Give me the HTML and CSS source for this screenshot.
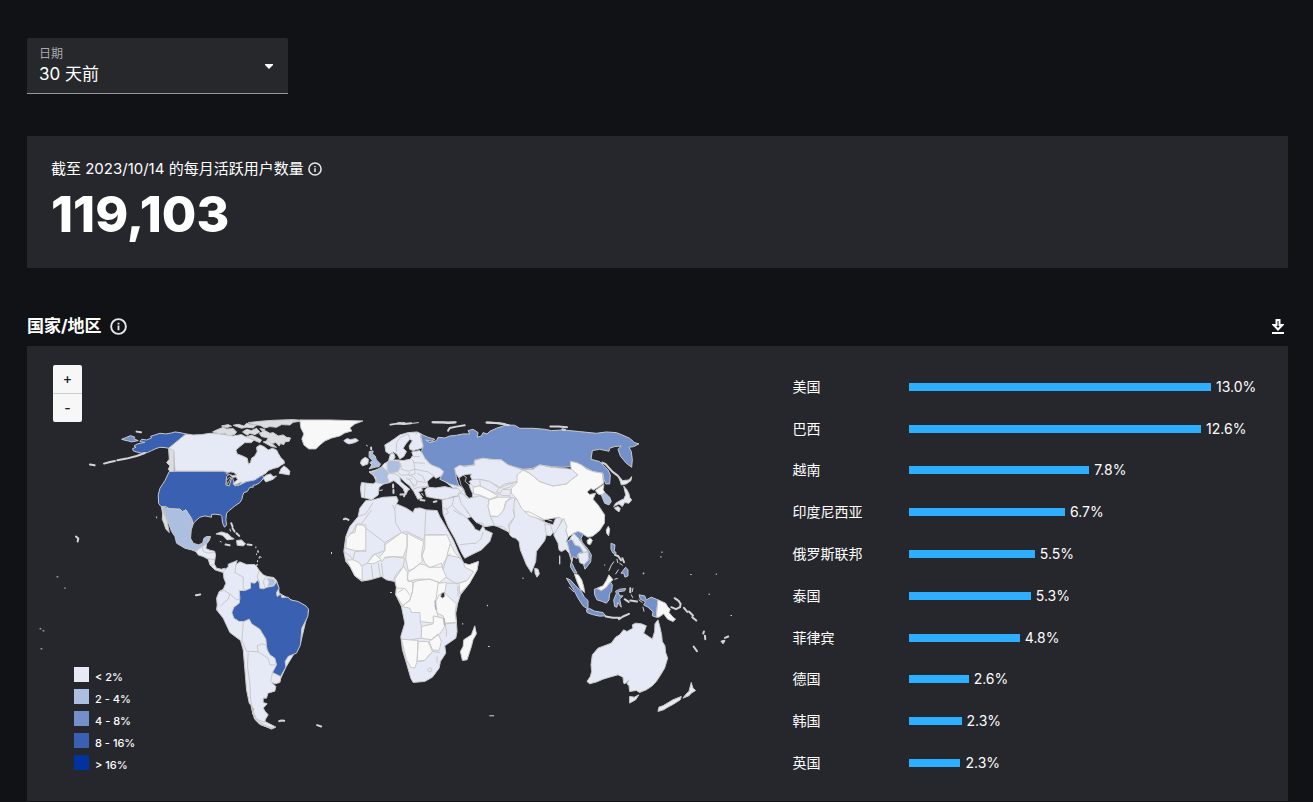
FILE: index.html
```html
<!DOCTYPE html>
<html lang="zh-CN">
<head>
    <meta charset="UTF-8">
    <meta name="viewport" content="width=device-width, initial-scale=1.0">
    <title>每月活跃用户</title>
    <link rel="stylesheet" href="styles.css">
</head>
<body>
    <main class="page">
        <div class="date-field">
            <label for="dateRange">日期</label>
            <select id="dateRange">
                <option>30 天前</option>
            </select>
            <svg class="date-arrow" viewBox="0 0 8 5" aria-hidden="true"><path d="M0 0h8v1L4 5 0 1z"/></svg>
        </div>

        <section class="summary-card">
            <h2 class="summary-label">
                截至 2023/10/14 的每月活跃用户数量
                <svg class="info-icon" viewBox="0 0 18 18" aria-hidden="true"><circle cx="9" cy="9" r="7.8"/><path d="M9 8v5M9 5v1.8"/></svg>
            </h2>
            <p class="summary-value">119,103</p>
        </section>

        <section>
            <header class="section-header">
                <h2>国家/地区</h2>
                <svg class="info-icon large" viewBox="0 0 18 18" aria-hidden="true"><circle cx="9" cy="9" r="7.8"/><path d="M9 8v5M9 5v1.8"/></svg>
                <button class="download-button" aria-label="下载">
                    <svg viewBox="0 0 12 15" aria-hidden="true"><path d="M4.500 1h3v5h2.800L6 10.500 1.700 6h2.800z"/><path d="M0 14h12"/></svg>
                </button>
            </header>

            <div class="region-panel">
                <div class="map-wrap">
                    <svg class="world-map" viewBox="27 346 736 455" role="img" aria-label="国家/地区">
                        <!-- North America -->
                        <g transform="translate(60 410) scale(.33333)">
                            <path class="c1" d="M378 72L400 75 425 74 450 70 480 72 500 75 520 78 545 74 560 82 575 78 582 90 575 98 555 98 540 110 528 120 532 132 548 138 562 145 566 163 572 158 575 145 585 138 592 125 590 112 600 105 612 110 625 120 638 115 650 120 655 130 662 142 672 152 674 160 665 165 655 172 640 176 625 182 618 190 608 196 603 198 585 210 572 215 555 216 540 225 525 228 520 218 528 208 515 200 505 190 490 184H345L342 125 326 115z"/>
                            <path class="c4" d="M378 72L360 68 345 66 335 69 318 72 300 70 285 75 272 79 275 84 260 90 245 88 240 95 255 97 232 102 222 108 228 112 218 116 220 123 230 126 245 130 262 128 275 122 288 116 300 112 315 113 326 115z"/>
                            <path class="coast" d="M326 115L342 122V185L333 188 325 178 330 168 320 158 328 148z"/>
                            <path class="isle" d="M255 129L230 138 200 146 172 151M165 153L150 156 132 161M90 164L104 166M230 65L243 67"/>
                            <path class="c3" d="M185 88L200 82 212 77 225 82 222 87 235 92 215 96 205 93 195 91z"/>
                            <path class="coast" d="M598 70L615 62 630 70 640 68 655 78 670 75 680 82 692 84 688 94 675 96 672 104 662 101 658 108 648 98 635 101 620 92 625 84 605 80z"/>
                            <path class="coast" d="M458 66L470 60 490 52 500 57 520 56 530 66 525 73 505 78 495 71 480 72zM520 46L535 43 552 48 560 40 578 45 590 45 580 54 560 52 545 55zM548 66L560 58 575 62 590 55 600 66 585 74 570 70 562 76zM565 38L600 34 640 31 700 29 735 32 700 37 690 45 665 44 650 52 630 50 615 54 600 46 580 44zM485 48L505 44 515 49 500 53zM600 56L615 58 610 66zM560 80L575 76 590 82 605 90 600 98 585 92zM610 96L625 92 640 104 650 112 635 110z"/>
                            <path class="c4" d="M345 184H490L512 190 500 200 498 225 508 228 515 205 526 206 520 222 525 228 540 225 560 215 585 210 603 198 608 196 612 204 600 218 588 225 580 226 580 232 570 232 562 245 552 248 548 258 546 268 540 278 525 288 508 302 500 310 498 330 500 345 494 352 488 340 486 320 482 315 465 313 455 314 455 322 435 318 420 322 405 335 400 342 395 325 385 312 378 300 368 305 360 298H330L318 290H303L296 280 295 255 300 235 315 212 328 185z"/>
                            <path class="sea" d="M498 191L512 186 522 188 530 195 518 197 508 193zM502 224L500 212 508 202 514 203 507 214zM518 203L528 201 533 209 522 218zM523 226L545 217 538 224z"/>
                            <path class="c2" d="M306 292L330 296 360 298 368 305 378 300 390 318 400 342 394 360 392 385 400 400 415 405 428 400 432 385 440 380 452 380 448 392 440 402 432 405 428 412 412 418 408 425 395 420 375 415 350 400 345 380 335 365 328 345 320 328z"/>
                            <path class="coast" d="M305 292L315 318 322 335 328 368 318 358 312 340 307 328 308 312z"/>
                            <path class="c1" d="M408 425L415 418 428 410 440 402 438 416 450 421 464 424 467 435 463 462 470 475 485 478 495 475 500 482 490 488 478 484 465 480 450 465 445 448 430 440 415 435z"/>
                            <path class="border" d="M428 412L430 425 445 430 464 426M440 445L463 450M462 465L452 465"/>
                            <path class="c1" d="M610 205L618 196 632 192 640 200 650 198 640 208 618 216zM658 190L664 176 672 168 682 175 690 184 688 195 672 192z"/>
                            <path class="c1" d="M468 372L485 366 505 372 513 381 523 387 502 390 488 376zM530 392L545 390 557 402 550 408 532 406z"/>
                            <path class="isle" d="M497 404l12 2M563 404l12 1M514 340l4 10M518 355l6 10M530 370l8 8M48 380l7 6-2 9"/>
                            <path class="dot" d="M510 358l2 6M588 411v3M594 422v5M600 440v3M593 452v4M588 468l4-3M590 432v2M290 321v3M481 395l3 1M15 534v2"/>
                        </g>
                        <path class="c0" d="M300 420L330 420 363 421 355 424 350 428 352 431 345 433 340 436 332 438 325 441 320 445 316 449 309 449 304 445 302 439 304 434 301 428z"/>

                        <!-- South America -->
                        <g transform="translate(180 550) scale(.33333)">
                            <path class="c1" d="M130 65L145 50 145 43 165 35 172 32 168 45 180 36 200 44 225 44 232 52 238 62 250 75 262 80 282 83 290 92 296 112 298 130 330 148 386 180 362 280 318 352 303 385 300 398 286 402 275 397 288 410 285 424 264 430 260 445 250 445 250 458 262 462 250 475 256 485 265 495 257 508 255 515 288 532 275 538 245 525 228 510 218 490 222 478 208 460 200 420 195 360 190 300 182 272 150 248 130 205 110 180 112 165 110 145 118 125 130 118 138 100 132 85z"/>
                            <path class="c4" d="M178 122L195 122 212 115 212 98 225 100 232 92 238 95 240 115 250 117 262 112 282 108 290 96 298 115 290 128 292 140 303 132 306 143 325 142 332 150 355 155 378 168 386 178 384 200 366 235 362 285 350 310 325 320 316 335 318 352 302 380 278 368 290 345 285 325 270 315 262 300 260 290 258 268 240 238 215 222 208 208 192 215 178 215 162 205 156 188 162 172 178 160 180 145z"/>
                            <path class="c2" d="M263 86L282 88 286 96 280 108 264 108 268 98z"/>
                            <path class="border" d="M168 45L165 68 190 82V112L195 122M238 62L232 80 240 105M258 82L250 95 255 112M118 125L132 122 150 132 145 148 130 160 122 170M150 132L170 150 178 148M190 215L188 250 186 272 200 304 235 306 232 288 245 282 260 286M235 306L265 325 270 345 287 345M205 308L203 350 210 400 212 450 218 480 230 508 255 518M278 368L272 395"/>
                            <path class="isle" d="M298 514l7-2 8 1M412 526l12 4M48 136l13-2"/>
                            <path class="dot" d="M238 22v3M235 4v3M241 20l3 3M230 45h3M455 8v3"/>
                            <path class="coast" d="M214 470L220 495 235 514 258 528 280 535 268 534 240 524 224 508z"/>
                        </g>

                        <!-- Europe and the Middle East -->
                        <g transform="translate(330 410) scale(.33333)">
                            <path class="c1" d="M42 92L52 86 62 89 78 86 86 92 75 98 58 102 48 98zM92 160L95 150 106 142 116 148 114 162 98 168z"/>
                            <path class="c2" d="M118 125L130 123 128 132 136 138 140 150 152 162 148 170 136 172 118 177 126 165 120 158 128 152 118 142z"/>
                            <path class="c1" d="M165 105L180 96 195 86 210 75 235 68 262 66 275 72 272 80 276 95 282 108 275 115 250 122 240 118 238 108 248 92 240 88 228 102 220 115 230 125 222 140 210 147 202 133 192 126 178 132 168 125z"/>
                            <path class="border" d="M235 72L212 82 200 98 200 125M235 72L242 90M262 66L258 74"/>
                            <path class="c1" d="M182 132L192 130 196 142 190 150 205 150 220 152 240 148 250 138 246 126 270 122 285 140 298 160 310 165 330 172 342 186 335 198 318 205 312 198 300 208 292 215 296 230 275 235 278 242 266 246 278 264 264 268 252 245 240 228 225 216 210 202 212 214 225 226 240 238 234 242 228 255 220 236 205 222 192 212 180 218 162 222 148 232 145 255 125 270 110 265 95 262 92 235 95 218 130 222 140 215 132 198 118 186 132 182 152 176 162 162 176 154z"/>
                            <path class="c2" d="M118 186L132 186 140 180 158 170 165 178 178 188 172 200 178 215 162 222 138 218 140 204 130 194zM172 160L180 152 208 154 212 170 205 185 182 190 172 182z"/>
                            <path class="border" d="M212 160L215 178 235 184 255 178 252 156 245 148M255 178L275 182 295 186 310 196M252 158L285 160M270 140L245 140M205 188L215 196 235 195 240 186M235 195L250 200 262 214 258 228 246 222 240 210 228 204M262 214L290 218M262 190L280 200 285 214M178 190L196 192 210 200M250 238L266 232 290 230M106 222L104 262M236 208L248 206M244 216L252 232M255 178L256 192 240 196"/>
                            <path class="isle" d="M190 224v9M191 240v9M212 254l13-1-2 6M272 270l12 2M312 276l8-2M124 113v5M182 44l20-3 20 1 22-2M310 37h30l15 2 20-1M470 38l30 1 25 3"/>
                            <path class="dot" d="M150 242l8-2M110 106l3 2M276 250l4 6M205 38h20M248 40l18-2"/>
                            <path class="c1" d="M285 240L295 232 318 234 345 230 372 236 388 236 398 248 395 256 370 260 350 268 335 268 310 264 290 260z"/>
                            <path class="c1" d="M345 214L365 218 385 224 402 238 410 250 395 250 385 236 370 234zM337 270L372 262 394 256 400 280 412 305 425 320 412 325 432 350 436 358 450 364 460 348 466 360 488 370 480 395 455 420 430 432 405 445 396 430 375 385 355 350 340 312z"/>
                            <path class="border" d="M372 262L368 285 350 298 340 294M368 285L380 300 412 325M350 298L356 308 342 316M370 300L395 316M390 405L410 402 440 400 455 385 460 365M372 236L388 228 398 232"/>
                        </g>

                        <!-- Africa -->
                        <g transform="translate(330 480) scale(.33333)">
                            <path class="c1" d="M108 62L122 62 160 52 200 50 205 62 200 72 230 85 250 98 255 86 270 84 290 90 322 92 330 110 345 135 370 180 385 215 402 250 418 255 446 245 442 270 418 312 392 345 384 370 378 400 382 455 378 475 345 498 348 520 332 545 328 565 308 592 285 605 250 608 243 595 230 550 218 510 213 470 225 430 215 380 198 345 200 322 195 305 170 300 155 290 120 300 95 304 75 288 62 262 48 245 42 215 48 170 60 140 85 110 90 85z"/>
                            <path class="c0" d="M50 175L65 160 75 158 80 135 108 135V215L75 212 48 205zM165 195L215 158 232 165V200L220 232 190 230 165 232 158 245 145 238 165 212zM232 160L282 185 275 225 278 245 250 268 235 272 228 235 232 200zM285 165H352L362 190 350 235 335 262 300 262 285 250 277 228 285 205zM285 255L300 264 335 250 340 270 350 290 330 308 300 298 262 298 235 305 232 280 270 252zM200 322L195 298 222 258 228 270 235 280 232 300 250 308 248 335 240 360 220 378 198 345zM250 308L265 302 300 298 328 308 325 345 318 365 320 390 325 410 310 410 312 430 272 425 270 398 245 398 240 385 215 380 240 362 248 335z"/>
                            <path class="c0" d="M325 310L350 308 345 340 380 372 376 400 380 428 345 430 340 408 322 400 318 365zM275 440L310 432 312 408 340 415 345 440 330 462 305 480 275 475zM298 485L325 462 335 485 328 512 308 510zM265 485H295L308 515 285 542 262 545zM215 478L240 480 265 482 262 545 255 565 243 562 230 540zM418 255L446 245 442 270 418 312 390 342 388 310 412 302 432 275 405 262 402 250zM50 240L70 240 88 248 97 262V302L75 288 62 262zM112 250L135 222 155 240 130 252zM352 225L362 192 375 218 400 244 385 232z"/>
                            <path class="c0" d="M435 438L440 462 430 480 425 500 412 540 398 542 392 515 400 500 402 480 425 465z"/>
                            <path class="border" d="M85 110L108 102 130 68M95 132L125 90M60 160L68 158 80 132H95L108 145 165 188 215 158 198 130 195 85 200 72M188 75L195 90M215 158L232 155 282 180 285 165 288 90M285 165H345M108 210L75 216 70 238M42 215L60 228 70 240M165 188V212L130 225 112 250 97 258M165 235L190 230 225 235 220 260 198 285 190 302M145 250L152 290M125 256L130 298M155 250L160 290M340 270L350 235 362 220M348 292L380 312 412 302M350 310H385M384 318L385 350M275 440V475L240 480M272 425L275 440M345 430L350 450V470M380 428L350 432M262 545L285 542 308 515 330 518M322 530v20M205 338L225 325 240 345M318 365L328 345 345 340M202 325h18"/>
                            <circle class="border" cx="300" cy="570" r="6"/>
                            <path class="sea" d="M335 340L344 338 345 350 337 355 333 350zM316 362l3 28-3-10zM343 415l3 20-2 0z"/>
                            <path class="isle" d="M42 118l6-2 8 4"/>
                            <path class="dot" d="M5 218v2M473 376v2M476 500h3M399 431v2M182 338h3"/>
                        </g>

                        <!-- Asia -->
                        <g transform="translate(430 410) scale(.33333)">
                            <path class="c1" d="M90 250L130 215 262 215 280 290 350 340 300 380 245 370 195 346 165 350 140 337 112 298z"/>
                            <path class="c3" d="M-28 72L-5 82 15 88 5 94 -12 90 0 98 20 92 25 82 45 84 60 78 80 76 100 72 120 72 115 62 130 58 145 68 142 82 155 78 160 68 172 72 180 64 200 55 230 45 255 46 270 55 310 55 345 58 365 62 400 60 450 65 500 70 530 66 560 68 580 76 600 85 615 98 628 102 612 110 598 112 605 125 608 150 606 172 590 160 572 138 565 118 575 108 555 110 540 115 538 124 510 118 488 122 484 148 510 155 520 165 535 180 542 195 540 222 528 222 522 205 520 190 490 185 472 175 455 165 425 155 425 170 400 172 365 170 330 165 310 175 280 178 250 170 235 165 215 150 180 148 160 145 135 150 132 165 105 168 75 175 78 190 80 205 88 230 60 222 30 208 42 185 30 175 5 165 -15 145 -25 125 -20 108z"/>
                            <path class="c1" d="M75 175L90 166 105 170 135 165 135 152 160 145 180 148 215 150 235 165 250 170 280 180 270 195 262 215 225 222 210 232 180 215 150 208 130 214 122 200 125 192 105 194 98 203 88 205 78 190z"/>
                            <path class="c1" d="M118 215L130 208 150 208 180 215 208 235 240 222 262 216 262 228 245 240 240 258 215 256 195 248 175 240 150 228 132 232z"/>
                            <path class="border" d="M208 235L200 245 212 250 218 238 245 240M150 208L152 228M218 238L240 232 250 222"/>
                            <path class="c1" d="M85 250L100 252 112 265 130 262 150 258 178 268 175 290 182 318 195 345 165 350 158 340 140 338 120 315 110 300 95 282z"/>
                            <path class="c0" d="M130 232L150 228 175 240 205 258 180 268 150 255 132 252zM178 270L205 262 245 262 228 275 222 300 205 320 182 318 175 290z"/>
                            <path class="c1" d="M182 320L205 320 222 300 230 275 250 262 265 280 250 300 255 320 235 345 245 375 230 360 220 350 195 348z"/>
                            <path class="c1" d="M255 265L272 280 285 305 340 335 370 345 378 325 400 322 390 345 378 375 370 368 362 378 350 375 345 392 320 425 318 455 305 488 290 465 272 420 268 395 258 385 248 382 240 375 238 350 255 320 252 295z"/>
                            <path class="c0" d="M262 195L280 180 300 190 330 215 370 228 410 222 430 205 445 195 425 182 422 155 440 158 455 165 472 178 490 185 518 190 522 220 505 232 492 240 484 236 472 246 480 254 498 250 490 268 505 285 525 315 524 340 510 362 490 378 475 382 455 370 432 370 415 382 408 360 400 330 388 322 340 330 300 318 275 295 262 268 245 250 245 235 262 218z"/>
                            <path class="border" d="M285 305L298 306 342 328 345 338M345 342L362 345 370 368M345 342L350 375M350 328L368 334"/>
                            <path class="c1" d="M280 180L310 178 330 165 365 172 400 175 425 178 445 195 430 205 410 222 370 228 330 215 300 190z"/>
                            <path class="c0" d="M497 242L510 232 523 224 520 240 526 248 515 255 505 252z"/>
                            <path class="c2" d="M515 255L528 250 540 262 545 275 538 285 525 280z"/>
                            <path class="c1" d="M568 205L580 212 598 210 606 200 604 212 590 222 575 225 572 215zM582 228L592 240 598 252 600 262 606 270 598 280 585 278 578 290 568 282 552 290 558 280 575 270 582 268 588 255zM554 294L565 290 572 296 568 306 560 300zM315 475L325 478 329 492 322 502 316 490z"/>
                            <path class="c0" d="M472 392L482 384 488 392 482 404 474 402zM530 360L536 349 540 358 537 378 531 370z"/>
                            <path class="c1" d="M372 375L390 345 402 325 412 350 408 362 415 382 410 395 420 415 428 440 426 455 418 430 408 418 395 425 388 420 385 400z"/>
                            <path class="c1" d="M418 392L425 380 432 370 445 382 450 392 465 410 475 425 462 428 450 410 435 405 430 392zM445 432L475 425 476 448 465 465 450 458z"/>
                            <path class="c3" d="M412 395L424 388 430 394 435 405 450 410 460 425 445 432 442 446 430 440 426 458 434 475 442 490 432 488 422 470 426 450 418 420zM432 370L445 364 462 372 454 385 458 398 475 418 485 435 483 456 466 478 462 465 478 450 475 425 458 402 446 385z"/>
                            <path class="isle" d="M518 158l10 5 20 22 16 12 10 12M55 62l5-8 20-4 25-4M8 37l30 1 40-1M172 38l35 2 30 6M362 50l25 0 25 2M398 58l8 2"/>
                            <path class="dot" d="M390 440v22M280 504v2M641 490v2M525 465v1"/>
                            <path class="sea" d="M88 204L100 196 110 202 106 214 118 225 122 238 128 250 128 262 118 265 108 255 102 238 94 226z"/>
                        </g>

                        <!-- Southeast Asia and Oceania -->
                        <g transform="translate(540 520) scale(.33333)">
                            <path class="c0" d="M104 162L116 165 126 180 132 200 135 218 122 208 112 185z"/>
                            <path class="c3" d="M80 175L92 180 108 198 125 215 134 232 145 242 145 268 130 258 115 235 105 215 92 195zM140 270L150 266 165 274 190 278 198 288 180 289 158 284 142 278zM164 208L172 206 185 212 200 202 212 186 218 195 216 215 210 222 208 240 200 250 188 245 172 240 165 225z"/>
                            <path class="c0" d="M172 205L190 198 200 182 208 165 220 180 210 188 200 202 185 212z"/>
                            <path class="c3" d="M225 260L222 240 230 222 228 214 240 208 258 206 255 213 235 216 240 228 250 228 240 238 245 262 234 248 232 262z"/>
                            <path class="c3" d="M298 225L315 228 320 240 335 232 355 240 350 292 338 288 340 276 325 262 312 255 318 246 302 238zM214 70L226 75 224 92 230 100 220 100 214 88zM250 152L258 142 265 150 265 168 256 172 252 160 244 160z"/>
                            <path class="c0" d="M355 240L378 250 385 262 392 268 388 278 400 292 408 298 400 305 384 298 372 282 358 292 350 292z"/>
                            <path class="isle" d="M198 290l22 4 20 0M238 298l12-8 18-8M272 205l0 12M255 238l12 8M272 242l20 3M226 105l10 4 8 12M248 115l5 12M395 262l14 6 12-6 2-10M405 235l12 8 5 8M433 264l10 12M448 275l12 12M458 292l12 10M493 335l-2 6M496 348l1 10M546 365l8-2-4 6M556 354l10-4M462 380l10 14"/>
                            <path class="dot" d="M280 205l-2 10M275 225l4 8M298 240l10 8M310 262l3 12M208 152l6-14 8-12M232 118l2 10M240 130l8 6M236 150l-8 12M225 178l8-2M88 202l14 14M60 108v24M367 96v2M364 110v2M311 160h2M453 164h2M530 162v2M508 223h2M574 287h2"/>
                            <path class="c1" d="M355 300L360 318 366 345 368 365 376 378 378 398 384 415 375 445 360 470 350 485 338 498 320 510 300 518 290 512 270 515 268 498 262 492 268 480 256 492 252 490 250 472 235 465 210 472 190 478 172 486 150 492 142 485 152 470 156 455 154 435 158 405 175 385 215 370 228 352 240 345 252 330 262 335 280 325 278 315 288 310 305 312 320 318 316 330 312 340 330 352 338 358 345 335 346 312z"/>
                            <path class="c1" d="M270 530L284 532 298 525 288 540 270 550zM455 488L460 505 468 512 455 520 448 528 430 535 440 522 448 515zM355 575L358 562 370 558 400 540 425 530 422 540 400 554 385 562 372 570z"/>
                        </g>
                        <path class="dot" d="M40 629h1M43 631h1M41 649h1M490 716h4M197 595h2M57 577h1"/>
                    </svg>

                    <div class="zoom-buttons">
                        <button aria-label="放大">+</button>
                        <button aria-label="缩小">-</button>
                    </div>

                    <ul class="legend">
                        <li><span class="swatch range-1"></span>&lt; 2%</li>
                        <li><span class="swatch range-2"></span>2 - 4%</li>
                        <li><span class="swatch range-3"></span>4 - 8%</li>
                        <li><span class="swatch range-4"></span>8 - 16%</li>
                        <li><span class="swatch range-5"></span>&gt; 16%</li>
                    </ul>
                </div>

                <ol class="country-list">
                    <li><span class="country">美国</span><div class="track"><div class="bar" style="width: 85.1%"></div><span>13.0%</span></div></li>
                    <li><span class="country">巴西</span><div class="track"><div class="bar" style="width: 82.3%"></div><span>12.6%</span></div></li>
                    <li><span class="country">越南</span><div class="track"><div class="bar" style="width: 50.8%"></div><span>7.8%</span></div></li>
                    <li><span class="country">印度尼西亚</span><div class="track"><div class="bar" style="width: 44%"></div><span>6.7%</span></div></li>
                    <li><span class="country">俄罗斯联邦</span><div class="track"><div class="bar" style="width: 35.5%"></div><span>5.5%</span></div></li>
                    <li><span class="country">泰国</span><div class="track"><div class="bar" style="width: 34.4%"></div><span>5.3%</span></div></li>
                    <li><span class="country">菲律宾</span><div class="track"><div class="bar" style="width: 31.3%"></div><span>4.8%</span></div></li>
                    <li><span class="country">德国</span><div class="track"><div class="bar" style="width: 16.9%"></div><span>2.6%</span></div></li>
                    <li><span class="country">韩国</span><div class="track"><div class="bar" style="width: 14.9%"></div><span>2.3%</span></div></li>
                    <li><span class="country">英国</span><div class="track"><div class="bar" style="width: 14.6%"></div><span>2.3%</span></div></li>
                </ol>
            </div>
        </section>
    </main>
</body>
</html>
```
FILE: styles.css
```css
* {
    margin: 0;
    padding: 0;
    box-sizing: border-box;
}

body {
    background-color: #111216;
    color: #fff;
    font-family: Inter, "Noto Sans CJK SC", sans-serif;
    font-size: 14px;
    line-height: 20px;
}

button,
select {
    font-family: inherit;
}

.page {
    padding: 38px 25px 0 27px;
}

.date-field {
    position: relative;
    width: 261px;
    height: 56px;
    padding-top: 8px;
    background-color: #27282c;
    border-bottom: 1px solid #96979a;
    border-radius: 2px 2px 0 0;
}

.date-field label {
    display: block;
    padding-left: 12px;
    color: #a9aaad;
    font-size: 12px;
    line-height: 16px;
}

.date-field select {
    display: block;
    width: 100%;
    height: 24px;
    padding: 0 32px 0 12px;
    background: none;
    border: none;
    color: #fff;
    font-size: 17px;
    appearance: none;
    cursor: pointer;
}

.date-field option {
    background-color: #27282c;
}

.date-arrow {
    position: absolute;
    top: 26px;
    right: 15px;
    width: 8px;
    height: 5px;
    fill: #fff;
    pointer-events: none;
}

.summary-card {
    margin-top: 42px;
    padding: 23px 24px 24px;
    background-color: #26272c;
}

.summary-label {
    display: flex;
    align-items: center;
    gap: 4px;
    font-size: 15px;
    font-weight: 400;
}

.summary-value {
    margin-top: 5px;
    font-size: 50px;
    font-weight: 800;
    line-height: 60px;
}

.info-icon {
    width: 14px;
    height: 14px;
    fill: none;
    stroke: #e6e6e8;
    stroke-width: 2;
}

.info-icon.large {
    width: 17px;
    height: 17px;
}

.section-header {
    display: flex;
    align-items: center;
    gap: 8px;
    height: 40px;
    margin-top: 38px;
}

.section-header h2 {
    font-size: 17px;
    font-weight: 700;
}

.download-button {
    display: flex;
    margin-left: auto;
    padding: 4px;
    background: none;
    border: none;
    cursor: pointer;
}

.download-button svg {
    width: 12px;
    height: 15px;
    fill: none;
    stroke: #fff;
    stroke-width: 2;
}

.region-panel {
    display: grid;
    grid-template-columns: 7fr 5fr;
    background-color: #26272c;
}

.map-wrap {
    position: relative;
}

.world-map {
    display: block;
    width: 100%;
}

.world-map path,
.world-map circle {
    stroke: #c9c9c9;
    stroke-width: 1px;
    stroke-linejoin: round;
    vector-effect: non-scaling-stroke;
}

.world-map .c0 { fill: #f8f8f8; }
.world-map .c1 { fill: #e6eaf6; }
.world-map .c2 { fill: #adbfe0; }
.world-map .c3 { fill: #7390ca; }
.world-map .c4 { fill: #3a61b1; }
.world-map .coast { fill: #dcdde0; }
.world-map .border { fill: none; }

.world-map .sea {
    fill: #26272c;
    stroke: #b4b5b8;
}

.world-map .isle,
.world-map .dot {
    fill: none;
    stroke: #d3d4d8;
    stroke-linecap: round;
}

.world-map .isle {
    stroke-width: 2px;
}

.zoom-buttons {
    position: absolute;
    top: 19px;
    left: 26px;
    display: flex;
    flex-direction: column;
    width: 29px;
    border-radius: 2px;
    overflow: hidden;
}

.zoom-buttons button {
    height: 28px;
    background-color: #f7f7f7;
    border: none;
    color: #222;
    font-size: 14px;
    font-weight: 500;
    line-height: 28px;
    cursor: pointer;
}

.zoom-buttons button + button {
    height: 29px;
    border-top: 1px solid #ccc;
}

.legend {
    position: absolute;
    left: 47px;
    bottom: 26px;
    display: grid;
    gap: 2px;
    list-style: none;
    font-size: 11px;
    font-weight: 500;
}

.legend li {
    display: flex;
    gap: 6px;
}

.swatch {
    width: 15px;
    height: 15px;
}

.range-1 { background-color: #e6eaf6; }
.range-2 { background-color: #adbfe0; }
.range-3 { background-color: #7390ca; }
.range-4 { background-color: #3a61b1; }
.range-5 { background-color: #0033a0; }

.country-list {
    display: grid;
    grid-auto-rows: 1fr;
    padding: 20px 24px 17px 30px;
    list-style: none;
}

.country-list li {
    display: flex;
    align-items: center;
}

.country {
    flex: 0 0 116px;
}

.track {
    display: flex;
    flex: 1;
    align-items: center;
    gap: 5px;
}

.bar {
    height: 8px;
    background-color: #2eaeff;
}
```
